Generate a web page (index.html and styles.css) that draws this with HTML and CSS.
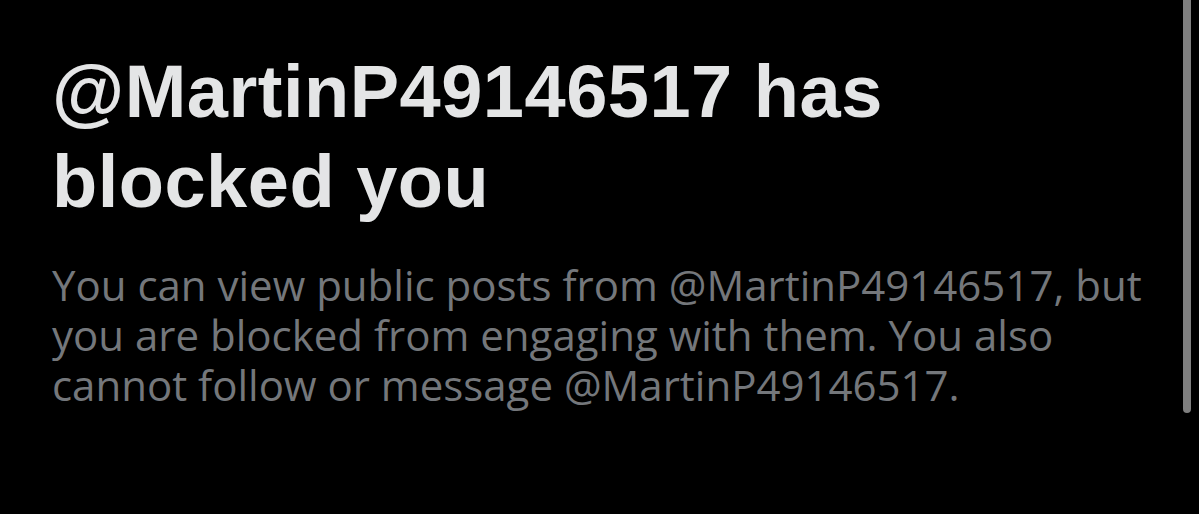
FILE: index.html
```html
<!DOCTYPE html>
<html>
<head>
<meta charset="UTF-8">
	<title>Blocked</title>
	<link rel="stylesheet" href="styles.css">
</head>
<body>
	<div class="blocked-page">
		<h1 class="blocked-title">@MartinP49146517 has blocked you</h1>
		<p class="blocked-text">You can view public posts from @MartinP49146517, but you are blocked from engaging with them. You also cannot follow or message @MartinP49146517.</p>
	</div>
	<!-- scroll indicator -->
	<div class="scroll-bar"></div>
</body>
</html>
```

FILE: styles.css
```css
html,
body {
  margin: 0;
  height: 100%;
  background-color: #000;
  overflow: hidden;
}

.blocked-page {
  padding: 47px 40px 0 52px;
}

.blocked-title {
  margin: 0;
  width: 1000px;
  font-family: "Liberation Sans", Arial, sans-serif;
  font-weight: bold;
  font-size: 74px;
  line-height: 90px;
  letter-spacing: 0.5px;
  color: #e4e5e6;
}

.blocked-text {
  margin: 33px 0 0;
  width: 1110px;
  font-family: "Open Sans", sans-serif;
  font-size: 42px;
  line-height: 50px;
  color: #74777b;
}

.scroll-bar {
  position: absolute;
  top: -10px;
  right: 8px;
  width: 8px;
  height: 423px;
  border-radius: 4px;
  background-color: #7f7f7f;
}
```
